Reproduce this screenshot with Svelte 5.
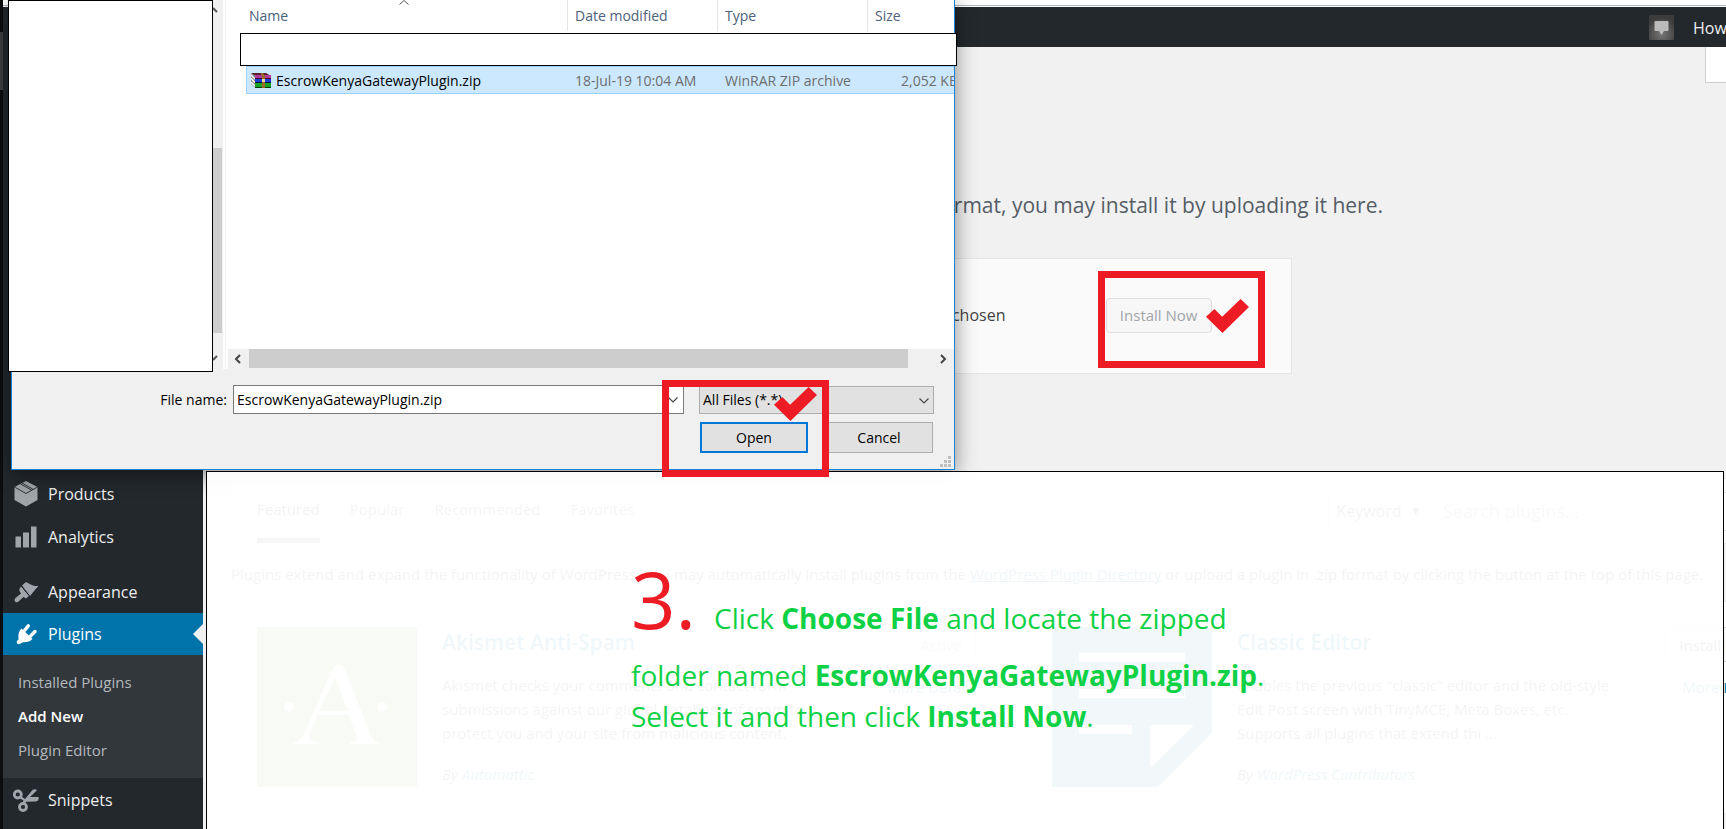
<script>
  const tabs = ['Featured', 'Popular', 'Recommended', 'Favorites'];
  const subItems = ['Installed Plugins', 'Add New', 'Plugin Editor'];
  let fileName = $state('EscrowKenyaGatewayPlugin.zip');
</script>

{#snippet tick()}
  <svg class="tick" viewBox="0 0 128 101" aria-hidden="true">
    <path d="M0 53 25 30 48 53 103 0 128 24 49 101z" fill="#ed1c24" />
  </svg>
{/snippet}

{#snippet chevron()}
  <svg class="chevron" viewBox="0 0 10 6" aria-hidden="true">
    <path d="M.5.5 5 5 9.500.5" fill="none" stroke="#444" stroke-width="1.1" />
  </svg>
{/snippet}

<div class="desktop">
  <div class="edge"><span></span></div>

  <div class="browser">
    <div class="chrome"></div>
    <header class="adminbar">
      <svg class="avatar" viewBox="0 0 25 25" aria-hidden="true">
        <defs>
          <radialGradient id="glow" cx="50%" cy="75%" r="65%">
            <stop offset="0" stop-color="#777" />
            <stop offset="1" stop-color="#3c3c3c" />
          </radialGradient>
        </defs>
        <rect width="25" height="25" rx="1" fill="url(#glow)" />
        <path d="M6.500 6h12q1 0 1 1v8q0 1-1 1h-3.500l-2.500 4-2.500-4h-3.500q-1 0-1-1v-8q0-1 1-1z" fill="#bbb" />
      </svg>
      <a class="howdy" href="#profile">Howdy,</a>
    </header>

    <div class="columns">
      <nav class="menu">
        <a class="item" href="#products">
          <svg viewBox="0 0 24 26" class="glyph" aria-hidden="true">
            <path d="M12 0 23.500 6v13L12 25.500.5 19V6z" fill="#a0a5aa" />
            <path d="M.5 6 12 12.500 23.500 6M6.500 3l11 6M8 2l11.500 6.500" fill="none" stroke="#23282d" stroke-width=".9" />
          </svg>
          Products
        </a>
        <a class="item" href="#analytics">
          <svg viewBox="0 0 24 26" class="glyph" aria-hidden="true">
            <path d="M1.500 12.500h5.500v11H1.500zM9 8.500h6v15H9zM17 2.500h5.500v21H17z" fill="#a0a5aa" />
          </svg>
          Analytics
        </a>
        <a class="item spaced" href="#appearance">
          <svg viewBox="0 0 24 26" class="glyph" aria-hidden="true">
            <path d="M8 6.500 12 3q4 2 7 3.500 3 .8 5.500.5-2 2-4 4.500l-4.500 5.500z" fill="#a0a5aa" />
            <path d="M7 7.500 15 17l-3 2.500-2.500-1.500-5 4.500q-1.500 1.500-3.300.2-1.400-1.800 0-3.400L7 14.500 5.500 12q-.5-2.500 1.500-4.500z" fill="#a0a5aa" />
            <path d="M7.500 7 15.500 17" stroke="#23282d" stroke-width=".8" />
          </svg>
          Appearance
        </a>
        <a class="item active" href="#plugins">
          <svg viewBox="0 0 24 26" class="glyph" aria-hidden="true">
            <path d="M7.500 7.500 18.500 18q-3.500 3.500-9.500 3.200L6 22.800q-1.500 1-2.800-.2-1.200-1.400 0-2.800l1.400-1.600Q3.500 11 7.500 7.500z" fill="#fff" />
            <path d="m10.500 9.500 3.800-4.600M16.500 15l4.500-4.500" stroke="#fff" stroke-width="3.400" stroke-linecap="round" />
          </svg>
          Plugins
        </a>
        <div class="sub">
          {#each subItems as s}
            <a href="#sub" class:current={s === 'Add New'}>{s}</a>
          {/each}
        </div>
        <a class="item" href="#snippets">
          <svg viewBox="0 0 26 26" class="glyph" aria-hidden="true">
            <g fill="none" stroke="#a0a5aa" stroke-width="2.800">
              <circle cx="4.800" cy="7.500" r="3.500" />
              <circle cx="10" cy="20" r="3.500" />
            </g>
            <path d="M7 8.500 12 12 19.500 3q2.500-1.800 4.500.2L17 10h8.500q1 3.500-2.500 4.500l-10 .2-1.500 3.300-2.500-1 1.500-3.500-5-3z" fill="#a0a5aa" />
          </svg>
          Snippets
        </a>
      </nav>

      <main>
        <button class="screen-tab" aria-label="Screen Options"></button>
        <p class="lead">If you have a plugin in a .zip format, you may install it by uploading it here.</p>
        <div class="upload">
          <span>No file chosen</span>
          <button class="btn" disabled>Install Now</button>
        </div>

        <div class="filter">
          <div class="tabs">
            {#each tabs as t, i}
              <a href="#tab" class:current={i === 0}>{t}</a>
            {/each}
          </div>
          <button class="keyword" type="button">Keyword <span>▼</span></button>
          <input class="search" type="search" placeholder="Search plugins..." aria-label="Search plugins" />
        </div>

        <p class="intro">
          Plugins extend and expand the functionality of WordPress. You may automatically install plugins from the
          <a href="#dir">WordPress Plugin Directory</a> or upload a plugin in .zip format by clicking the button at the top of this page.
        </p>

        <div class="cards">
          <article>
            <svg class="logo" viewBox="0 0 160 160" aria-hidden="true">
              <rect width="160" height="160" fill="#7cab53" />
              <g fill="#fff">
                <path d="M82 38q4 0 6 5l26 66q3 6 8 6v2H93v-2q9 0 6-7l-7-20H61l-8 18q-4 9 9 9v2H36v-2q7 0 11-8l28-64q3-5 7-5zm-4 12L62 84h29z" />
                <circle cx="32" cy="80" r="5" /><circle cx="125" cy="80" r="5" />
              </g>
            </svg>
            <div class="about">
              <h3>Akismet Anti-Spam</h3>
              <p>Akismet checks your comments and contact form submissions against our global database of spam to protect you and your site from malicious content.</p>
              <p class="by">By <a href="#author">Automattic</a></p>
            </div>
            <div class="acts">
              <button class="btn" disabled>Active</button>
              <a href="#more">More Details</a>
            </div>
          </article>
          <article>
            <svg class="logo" viewBox="0 0 160 160" aria-hidden="true">
              <path d="M0 0h160v106l-54 54H0z" fill="#2c86ad" />
              <path d="M27 26h106v9H27zM27 62h106v9H27zM27 98h53v9H27zM98 98h44l-44 43z" fill="#fff" />
            </svg>
            <div class="about">
              <h3>Classic Editor</h3>
              <p>Enables the previous "classic" editor and the old-style Edit Post screen with TinyMCE, Meta Boxes, etc. Supports all plugins that extend thi ...</p>
              <p class="by">By <a href="#author">WordPress Contributors</a></p>
            </div>
            <div class="acts">
              <button class="btn">Install Now</button>
              <a href="#more">More Details</a>
            </div>
          </article>
        </div>
      </main>
    </div>
  </div>

  <section class="dialog" aria-label="Open file">
    <div class="panes">
      <div class="tree"></div>
      <div class="vscroll">
        <svg class="up" viewBox="0 0 5 6"><path d="M0 1 4 5" stroke="#555" stroke-width="2" /></svg>
        <i></i>
        <svg viewBox="0 0 5 6"><path d="M0 5 4 1" stroke="#555" stroke-width="2" /></svg>
      </div>
      <div class="split"></div>
      <div class="list">
        <div class="rows">
          <table>
            <thead>
              <tr><th class="name">Name</th><th>Date modified</th><th>Type</th><th>Size</th></tr>
            </thead>
            <tbody>
              <tr class="gap"><td colspan="4"></td></tr>
              <tr class="picked">
                <td>
                  <span class="file">
                    <svg viewBox="0 0 20 16" aria-hidden="true">
                      <path d="M0 1h15l5 3H4z" fill="#5a2030" />
                      <path d="M0 1 4 4v11.500L0 12z" fill="#8b8b8b" />
                      <path d="M0 3 4 7M0 6.500 4 10.500M0 10 4 14" stroke="#fff" stroke-width="1.400" />
                      <path d="M4 3h16v3H4z" fill="#b23a9a" /><path d="M4 6h16v1H4z" fill="#400a30" />
                      <path d="M4 7h16v3H4z" fill="#1a3fd0" /><path d="M4 10h16v1H4z" fill="#0a1240" />
                      <path d="M4 11h16v4H4z" fill="#16a422" /><path d="M4 15h16v1H4z" fill="#063a0a" />
                      <path d="M9.500 1h2.500l2 3v12h-3V4z" fill="#9a6a28" />
                      <rect x="11" y="7" width="3" height="3" fill="#e8d8a8" />
                    </svg>
                    EscrowKenyaGatewayPlugin.zip
                  </span>
                </td>
                <td>18-Jul-19 10:04 AM</td><td>WinRAR ZIP archive</td><td class="size">2,052 KB</td>
              </tr>
            </tbody>
          </table>
          <svg class="sort" viewBox="0 0 10 5"><path d="M.5 4.500 5 .5 9.500 4.500" fill="none" stroke="#555" /></svg>
        </div>
        <div class="hscroll">
          <svg viewBox="0 0 7 10"><path d="M6 1 2 5 6 9" fill="none" stroke="#444" stroke-width="2" /></svg>
          <i></i>
          <svg viewBox="0 0 7 10"><path d="M1 1 5 5 1 9" fill="none" stroke="#444" stroke-width="2" /></svg>
        </div>
      </div>
    </div>
    <form onsubmit={(e) => e.preventDefault()}>
      <div class="line">
        <label for="fname">File name:</label>
        <div class="combo">
          <input id="fname" type="text" bind:value={fileName} />
          {@render chevron()}
        </div>
        <div class="types">
          <select aria-label="File type"><option>All Files (*.*)</option></select>
          {@render chevron()}
        </div>
      </div>
      <div class="line buttons">
        <button class="primary" type="submit">Open</button>
        <button type="button">Cancel</button>
      </div>
    </form>
    <svg class="grip" viewBox="0 0 11 11" aria-hidden="true">
      <path d="M8 0h3v3H8zM4 4h3v3H4zM8 4h3v3H8zM0 8h3v3H0zM4 8h3v3H4zM8 8h3v3H8z" fill="#bfbfbf" />
    </svg>
  </section>

  <div class="mask tree-mask"></div>
  <div class="mask row-mask"></div>

  <section class="note">
    <p><b class="num">3.</b><span>Click <b>Choose File</b> and locate the zipped</span></p>
    <p>folder named <b>EscrowKenyaGatewayPlugin.zip</b>.</p>
    <p>Select it and then click <b>Install Now</b>.</p>
  </section>

  <div class="frame open-frame">{@render tick()}</div>
  <div class="frame install-frame">{@render tick()}</div>
</div>

<style>
  :global(body) { margin: 0; }
  * { box-sizing: border-box; }
  .desktop {
    position: relative;
    display: flex;
    height: 100vh;
    overflow: hidden;
    background: #f1f1f1;
    font-family: "Open Sans", "Noto Sans", sans-serif;
    font-size: 15px;
    color: #444;
  }
  p, h3 { margin: 0; font-weight: 400; }
  a { text-decoration: none; color: #0073aa; }
  button, input, select { font: inherit; color: inherit; margin: 0; border-radius: 0; }
  svg { display: block; flex: none; }

  .edge { width: 3px; background: #0c0d0f; padding-top: 32px; }
  .edge span { display: block; height: 58px; background: #3e3e3e; }
  .browser { flex: 1; min-width: 0; display: flex; flex-direction: column; }
  .chrome { height: 7px; flex: none; background: #fff; border-bottom: 1px solid #fff; box-shadow: inset 0 -1px #b4b6bc; }
  .adminbar { height: 40px; flex: none; display: flex; align-items: center; justify-content: flex-end; gap: 19px; background: #23282d; }
  .avatar { width: 25px; height: 25px; }
  .howdy { width: 33px; padding-top: 2px; overflow: hidden; color: #eee; white-space: nowrap; font-size: 16px; }

  .columns { flex: 1; display: flex; min-height: 0; }
  .menu { width: 200px; flex: none; padding-top: 425px; background: #23282d; }
  .item { position: relative; display: flex; align-items: center; gap: 9px; height: 43px; padding-left: 10px; color: #eee; font-size: 16px; }
  .glyph { width: 26px; height: 26px; }
  .spaced { margin-top: 13px; height: 42px; }
  .active { height: 42px; background: #0073aa; color: #fff; }
  .active::after { content: ""; position: absolute; right: 0; top: 11px; border: 10px solid transparent; border-left: 0; border-right-color: #f1f1f1; }
  .sub { padding: 10px 15px 11px; background: #32373c; }
  .sub a { display: block; line-height: 34px; color: #b4b9be; }
  .sub .current { color: #fff; font-weight: 600; }

  main { flex: 1; min-width: 0; margin-right: -71px; padding-left: 28px; }
  .screen-tab { display: block; width: 92px; height: 36px; margin-left: auto; background: #fff; border: 1px solid #ccd0d4; border-top: 0; }
  .lead { margin-top: 104px; padding-left: 14px; line-height: 36px; text-align: center; font-size: 21px; color: #555d66; }
  .upload { display: flex; align-items: center; justify-content: space-between; width: 555px; height: 116px; margin: 35px auto 0; padding: 0 79px 2px 162px; background: #fafafa; border: 1px solid #e5e5e5; }
  .upload span { font-size: 16px; }
  .btn { height: 35px; padding: 0 13px; background: #f7f7f7; border: 1px solid #ccc; border-radius: 4px; white-space: nowrap; }
  .btn:disabled { color: #a0a5aa; border-color: #ddd; }

  .filter { display: flex; align-items: center; height: 66px; margin-top: 104px; padding: 0 26px 0 25px; background: #fff; border: 1px solid #e5e5e5; }
  .tabs { flex: 1; align-self: stretch; display: flex; gap: 30px; }
  .tabs a { line-height: 60px; color: #555; }
  .tabs .current { color: #23282d; border-bottom: 5px solid #666; }
  .keyword { width: 102px; height: 39px; margin-right: 4px; padding: 0; background: #fff; border: 1px solid #ddd; font-size: 16px; }
  .keyword span { font-size: 12px; vertical-align: 2px; margin-left: 4px; }
  .search { width: 336px; height: 39px; padding: 0 8px; background: #fff; border: 1px solid #ddd; font-size: 18px; }
  .search::placeholder { color: #999; opacity: 1; }
  .intro { line-height: 24px; margin: 18px 0 15px; white-space: nowrap; }
  .intro a { text-decoration: underline; }
  .cards { display: grid; grid-template-columns: repeat(2, minmax(0, 1fr)); gap: 24px; }
  article { display: flex; gap: 25px; height: 213px; padding: 25px; background: #fff; border: 1px solid #e5e5e5; }
  .logo { width: 160px; height: 160px; }
  .about { flex: 1; line-height: 24px; }
  h3 { margin-bottom: 16px; line-height: 30px; font-size: 21px; font-weight: 600; color: #0073aa; }
  .about p { width: 395px; }
  .about .by { margin-top: 17px; font-style: italic; }
  .acts { display: flex; flex-direction: column; align-items: flex-end; gap: 12px; line-height: 26px; white-space: nowrap; }

  .dialog { position: absolute; left: 11px; top: 0; width: 944px; color: #000; background: #f0f0f0; border: 1px solid #1883d7; border-top: 0; box-shadow: 0 4px 20px rgba(0, 0, 0, .45); font-size: 14px; }
  .panes { display: flex; height: 369px; background: #fff; }
  .tree { width: 201px; }
  .vscroll { width: 10px; display: flex; flex-direction: column; justify-content: space-between; padding: 7px 0 8px; background: #f0f0f0; }
  .vscroll svg { width: 5px; height: 6px; }
  .vscroll i { width: 9px; height: 185px; margin-top: 128px; background: #cdcdcd; margin-bottom: 15px; }
  .split { width: 5px; border-left: 2px solid #fff; box-shadow: inset 1px 0 #f0f0f0; }
  .list { flex: 1; min-width: 0; display: flex; flex-direction: column; }
  .rows { position: relative; flex: 1; padding-left: 18px; overflow: hidden; }
  table { width: 771px; table-layout: fixed; border-collapse: separate; border-spacing: 0; }
  th { width: 150px; height: 31px; padding: 0 0 0 7px; text-align: left; font-weight: 400; color: #4c607a; border-left: 1px solid #e5e5e5; }
  th.name { width: 321px; padding-left: 3px; border-left: 0; }
  .gap td { height: 35px; padding: 0; }
  .picked td { height: 28px; padding: 0 0 0 8px; color: #6d6d6d; background: #cce8ff; border: 1px solid #99d1ff; border-width: 1px 0; white-space: nowrap; }
  .picked td:first-child { padding-left: 4px; color: #000; border-left-width: 1px; }
  .picked .size { padding: 0 59px 0 0; text-align: right; }
  .file { display: flex; align-items: center; gap: 5px; }
  .file svg { width: 20px; height: 16px; }
  .sort { position: absolute; left: 171px; top: 0; width: 10px; height: 5px; }
  .hscroll { display: flex; align-items: center; height: 20px; padding: 0 7px 1px 6px; background: #f0f0f0; }
  .hscroll svg { width: 7px; height: 10px; }
  .hscroll i { flex: 1; height: 19px; margin: 0 32px 0 8px; background: #cdcdcd; }
  form { height: 100px; padding: 16px 20px 0 0; }
  .line { display: flex; justify-content: flex-end; align-items: center; }
  label { margin-right: 6px; }
  .combo { display: flex; align-items: center; width: 451px; height: 29px; margin-right: 15px; padding-right: 5px; background: #fff; border: 1px solid #7a7a7a; }
  .combo input { flex: 1; min-width: 0; padding: 0 3px; border: 0; background: none; }
  .chevron { width: 10px; height: 6px; }
  .types { position: relative; width: 235px; }
  .types select { display: block; width: 100%; height: 28px; padding: 0 3px; appearance: none; background: #e1e1e1; border: 1px solid #adadad; }
  .types .chevron { position: absolute; right: 5px; top: 12px; }
  .buttons { gap: 17px; margin-top: 8px; padding-right: 1px; }
  .buttons button { width: 108px; height: 31px; padding: 0; background: #e1e1e1; border: 1px solid #adadad; }
  .buttons .primary { border: 2px solid #0078d7; }
  .grip { position: absolute; right: 3px; bottom: 2px; width: 11px; height: 11px; }

  .mask { position: absolute; background: #fff; border: 1px solid #000; }
  .tree-mask { left: 8px; top: 0; width: 205px; height: 372px; }
  .row-mask { left: 240px; top: 33px; width: 717px; height: 33px; }

  .note { position: absolute; left: 206px; right: 2px; top: 471px; bottom: 0; padding: 89px 20px 0 424px; background: rgba(255, 255, 255, .94); border: 1px solid #000; border-bottom: 0; color: #0ed145; font-size: 28px; line-height: 41px; white-space: nowrap; }
  .note p:first-child { display: flex; align-items: baseline; gap: 18px; height: 94px; line-height: 76px; }
  .num { font-size: 78px; font-weight: 400; color: #ed1c24; }
  .frame { position: absolute; width: 167px; height: 97px; border: 7px solid #ed1c24; pointer-events: none; }
  .open-frame { left: 662px; top: 380px; }
  .install-frame { left: 1098px; top: 271px; padding: 21px 0 0 101px; }
  .open-frame { padding: 0 0 0 105px; }
  .tick { width: 43px; height: 34px; }
</style>
